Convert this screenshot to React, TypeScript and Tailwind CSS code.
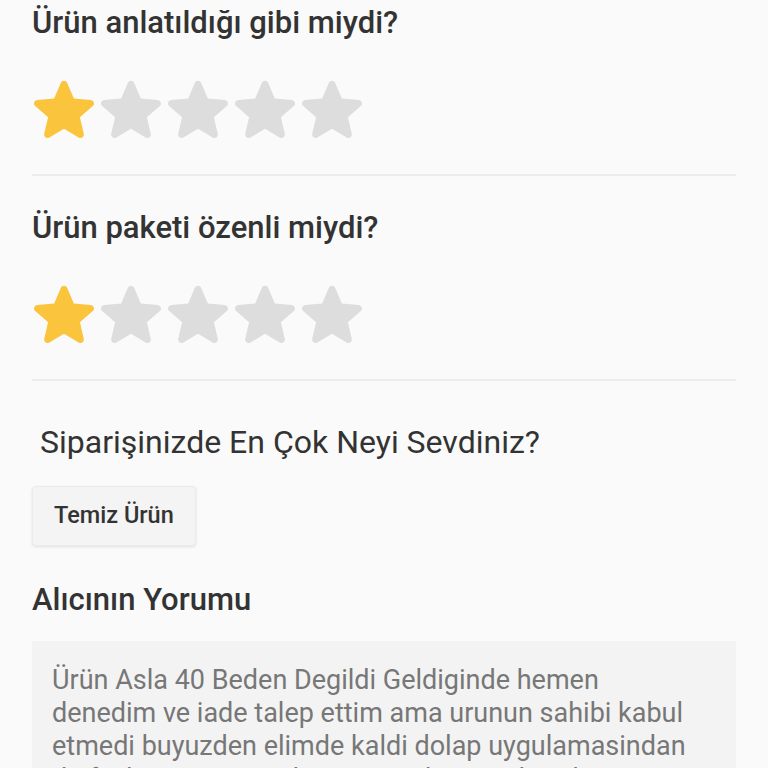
const FONT = "font-['Roboto',_'Noto_Sans',_sans-serif]";

function Star({ filled }: { filled: boolean }) {
  return (
    <svg width="60" height="61" viewBox="3.5 2.5 17 17.4" className="shrink-0">
      <path
        d="M12 17.27l4.15 2.51c.76.46 1.69-.22 1.49-1.08l-1.1-4.72 3.67-3.18c.67-.58.31-1.68-.57-1.75l-4.83-.41-1.89-4.46c-.34-.81-1.5-.81-1.84 0L9.19 8.63l-4.83.41c-.88.07-1.24 1.17-.57 1.75l3.67 3.18-1.1 4.72c-.2.86.73 1.54 1.49 1.08l4.15-2.5z"
        fill={filled ? '#fbc43d' : '#dddddd'}
      />
    </svg>
  );
}

function RatingSection({ title, rating, top }: { title: string; rating: number; top: string }) {
  return (
    <div className={`${top} pb-9 border-b-2 border-[#ececec]`}>
      <h2 className="text-[31px] leading-[36px] font-medium text-[#333333]">{title}</h2>
      <div className="mt-9 ml-[2px] flex gap-[7px]">
        {[1, 2, 3, 4, 5].map((i) => (
          <Star key={i} filled={i <= rating} />
        ))}
      </div>
    </div>
  );
}

export default function App() {
  return (
    <div className={`${FONT} min-h-[768px] bg-[#fafafa] px-8 overflow-hidden`}>
      <RatingSection title="Ürün anlatıldığı gibi miydi?" rating={1} top="pt-[5px]" />
      <RatingSection title="Ürün paketi özenli miydi?" rating={1} top="pt-[34px]" />

      {/* Favourite things */}
      <h2 className="mt-[43px] pl-2 text-[32px] leading-[36px] text-[#333333]">
        Siparişinizde En Çok Neyi Sevdiniz?
      </h2>
      <div className="mt-[26px] flex">
        <button className="h-[60px] px-[21px] rounded bg-[#f4f4f4] border border-[#ebebeb] shadow-[0_1px_3px_rgba(0,0,0,0.1)] text-[23.5px] font-medium text-[#333333]">
          Temiz Ürün
        </button>
      </div>

      {/* Buyer comment */}
      <h2 className="mt-9 text-[31px] leading-[36px] font-medium text-[#333333]">Alıcının Yorumu</h2>
      <div className="mt-[23px] bg-[#f3f3f3] px-5 pt-[23px] pb-6">
        <p className="text-[27px] leading-[33px] text-[#777777]">
          Ürün Asla 40 Beden Degildi Geldiginde hemen
          <br />
          denedim ve iade talep ettim ama urunun sahibi kabul
          <br />
          etmedi buyuzden elimde kaldi dolap uygulamasindan
          <br />
          da fazla satmaya calistim ama kimse almadi
        </p>
      </div>
    </div>
  );
}
